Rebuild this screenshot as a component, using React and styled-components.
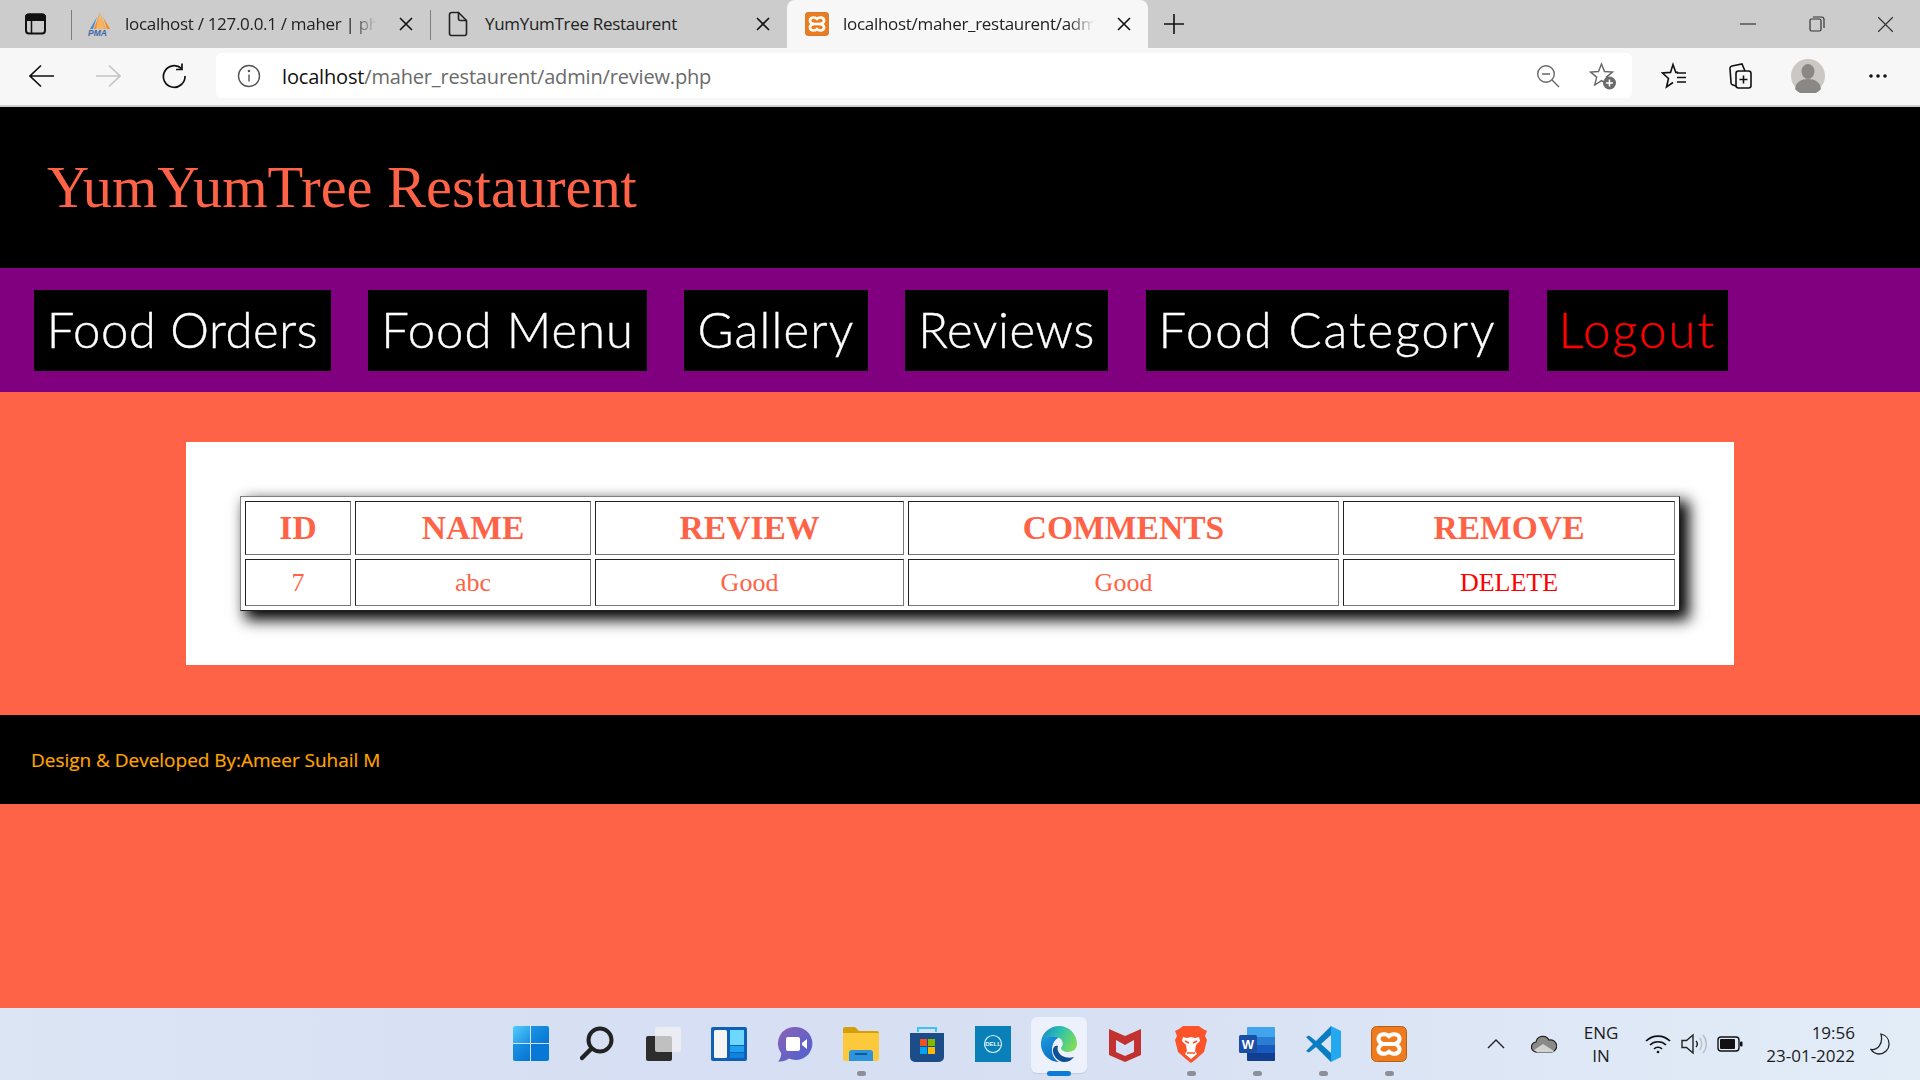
import styled, { createGlobalStyle } from "styled-components";

const GlobalStyle = createGlobalStyle`
  html, body {
    margin: 0;
    padding: 0;
    background: #ff6347;
    overflow: hidden;
  }
`;

const Screen = styled.div`
  width: 1920px;
  height: 1080px;
  display: flex;
  flex-direction: column;
  background: #ff6347;
  overflow: hidden;
`;

/* browser chrome */
const TabStrip = styled.div`
  height: 48px;
  flex: none;
  display: flex;
  align-items: stretch;
  background: #cccccc;
  font-family: "Open Sans", sans-serif;
  font-size: 17px;
  color: #222;
`;

const SideButton = styled.div`
  width: 71px;
  display: flex;
  align-items: center;
  padding-left: 24px;
  box-sizing: border-box;
`;

const Tab = styled.div`
  position: relative;
  width: ${(p) => p.$width}px;
  box-sizing: border-box;
  display: flex;
  align-items: center;
  padding: 0 17px 0 ${(p) => p.$pad}px;
  background: ${(p) => (p.$active ? "#f7f7f7" : "transparent")};
  border-radius: ${(p) => (p.$active ? "8px 8px 0 0" : "0")};
`;

const TabDivider = styled.span`
  position: absolute;
  left: 0;
  top: 10px;
  bottom: 8px;
  width: 1px;
  background: #7d7d7d;
`;

const TabIconSlot = styled.span`
  width: ${(p) => p.$width}px;
  flex: none;
  display: flex;
  align-items: center;
`;

const TabLabel = styled.span`
  flex: 1;
  min-width: 0;
  padding-bottom: 2px;
  white-space: nowrap;
  letter-spacing: -0.3px;
  ${(p) =>
    p.$fade &&
    `-webkit-mask-image: linear-gradient(to right, #000 86%, transparent 96%);
     mask-image: linear-gradient(to right, #000 86%, transparent 96%);`}
`;

const TabClose = styled.span`
  width: 14px;
  height: 14px;
  flex: none;
  margin-left: 12px;
  display: flex;
`;

const NewTab = styled.div`
  width: 52px;
  display: flex;
  align-items: center;
  justify-content: center;
`;

const WindowButtons = styled.div`
  margin-left: auto;
  display: flex;
  align-items: center;
`;

const WindowButton = styled.div`
  width: 69px;
  height: 48px;
  display: flex;
  align-items: center;
  justify-content: center;
`;

const Toolbar = styled.div`
  height: 59px;
  flex: none;
  box-sizing: border-box;
  display: flex;
  align-items: center;
  background: #f7f7f7;
  border-bottom: 2px solid #cfcfcf;
  padding: 0 0 2px 9px;
`;

const ToolButton = styled.div`
  width: ${(p) => p.$width || 66}px;
  height: 44px;
  flex: none;
  display: flex;
  align-items: center;
  justify-content: center;
`;

const AddressBar = styled.div`
  width: 1416px;
  height: 45px;
  margin-left: 9px;
  margin-right: 9px;
  flex: none;
  box-sizing: border-box;
  display: flex;
  align-items: center;
  background: #fff;
  border-radius: 6px;
  padding: 0 2px 0 21px;
  font-family: "Open Sans", sans-serif;
  font-size: 20px;
  letter-spacing: -0.17px;
`;

const UrlText = styled.div`
  margin-left: 21px;
  padding-top: 1px;
  flex: 1;
  color: #6a6a6a;
  white-space: nowrap;
  b {
    font-weight: 400;
    color: #111;
  }
`;

const AddressAction = styled.div`
  width: 55px;
  height: 44px;
  display: flex;
  align-items: center;
  justify-content: center;
`;

/* page */
const Header = styled.header`
  height: 161px;
  flex: none;
  box-sizing: border-box;
  background: #000;
  display: flex;
  align-items: center;
  padding: 0 0 1px 47px;
`;

const Title = styled.h1`
  margin: 0;
  font-family: "Liberation Serif", serif;
  font-weight: 400;
  font-size: 58.4px;
  color: #ff6347;
`;

const Nav = styled.nav`
  height: 124px;
  flex: none;
  box-sizing: border-box;
  background: #800080;
  display: flex;
  align-items: center;
  padding: 0 0 0 34px;
`;

const NavLink = styled.a`
  width: ${(p) => p.$width}px;
  height: 81px;
  margin-right: ${(p) => p.$gap}px;
  padding-bottom: 2px;
  box-sizing: border-box;
  flex: none;
  background: #000;
  color: ${(p) => (p.$danger ? "#ff0000" : "#fff")};
  display: flex;
  align-items: center;
  justify-content: center;
  font-family: "Lato", sans-serif;
  font-weight: 300;
  font-size: 49px;
  letter-spacing: ${(p) => p.$spacing}px;
  -webkit-text-stroke: 0.4px currentColor;
  white-space: nowrap;
`;

const Main = styled.main`
  flex: none;
  padding: 50px 186px;
`;

const Panel = styled.section`
  height: 223px;
  box-sizing: border-box;
  background: #fff;
  padding: 54px 0 0 54px;
`;

const ReviewTable = styled.table`
  width: 1440px;
  table-layout: fixed;
  border-collapse: separate;
  border-spacing: 4px;
  background: #fff;
  border: 1px solid;
  border-color: #808080 #222 #222 #808080;
  box-shadow: 7px 7px 14px 2px #000;
  font-family: "Liberation Serif", serif;
  color: #ff6347;
`;

const HeadCell = styled.th`
  height: 54px;
  box-sizing: border-box;
  padding: 0;
  border: 1px solid;
  border-color: #222 #777 #777 #222;
  font-size: 33.6px;
  font-weight: 700;
  text-align: center;
`;

const BodyCell = styled.td`
  height: 47px;
  box-sizing: border-box;
  padding: 0;
  border: 1px solid;
  border-color: #222 #777 #777 #222;
  font-size: 26px;
  text-align: center;
  color: ${(p) => (p.$danger ? "#ff0000" : "#ff6347")};
`;

const Footer = styled.footer`
  height: 89px;
  flex: none;
  box-sizing: border-box;
  background: #000;
  color: #ffa500;
  display: flex;
  align-items: center;
  padding: 0 0 0 31px;
  font-family: "Open Sans", sans-serif;
  font-weight: 500;
  font-size: 19px;
  letter-spacing: -0.02px;
  -webkit-text-stroke: 0.2px currentColor;
`;

const Spacer = styled.div`
  flex: 1;
`;

/* taskbar */
const Taskbar = styled.div`
  height: 72px;
  flex: none;
  display: grid;
  grid-template-columns: 1fr auto 1fr;
  align-items: center;
  background: linear-gradient(to right, #dbe5f4, #d6dff3 35%, #d8e1f3 60%, #e3edf8);
  font-family: "Open Sans", sans-serif;
  color: #1c1c1c;
  font-size: 17px;
`;

const TaskIcons = styled.div`
  grid-column: 2;
  display: flex;
`;

const TaskItem = styled.div`
  position: relative;
  width: 66px;
  height: 72px;
  display: flex;
  align-items: center;
  justify-content: center;
  box-sizing: border-box;
  &::before {
    content: "";
    display: ${(p) => (p.$active ? "block" : "none")};
    position: absolute;
    left: 5px;
    right: 5px;
    top: 9px;
    bottom: 7px;
    background: #edf1fb;
    border-radius: 6px;
    box-shadow: 0 1px 1px #c3cbdc;
  }
  &::after {
    content: "";
    display: ${(p) => (p.$dot || p.$active ? "block" : "none")};
    position: absolute;
    left: 50%;
    bottom: 4px;
    width: ${(p) => (p.$active ? 24 : 9)}px;
    height: 5px;
    margin-left: ${(p) => (p.$active ? -12 : -4.5)}px;
    border-radius: 3px;
    background: ${(p) => (p.$active ? "#0a7bd7" : "#8c8f99")};
  }
  svg {
    position: relative;
    z-index: 1;
  }
`;

const Tray = styled.div`
  grid-column: 3;
  display: flex;
  align-items: center;
  height: 72px;
  padding-left: 57px;
`;

const TraySlot = styled.div`
  width: ${(p) => p.$width}px;
  margin-left: ${(p) => p.$gap || 0}px;
  flex: none;
  display: flex;
  align-items: center;
  justify-content: center;
`;

const TrayText = styled.div`
  width: ${(p) => p.$width}px;
  flex: none;
  display: flex;
  flex-direction: column;
  align-items: ${(p) => p.$align};
  line-height: 23px;
  white-space: nowrap;
`;

/* icons */
const SidebarIcon = () => (
  <svg width="24" height="24" viewBox="0 0 24 24" fill="none" stroke="#111" strokeWidth="2">
    <rect x="2" y="2.5" width="19" height="19" rx="3" />
    <path d="M2 8h19V5a2.500 2.500 0 0 0-2.500-2.500h-14A2.500 2.500 0 0 0 2 5z" fill="#111" />
    <path d="M7.500 8v13" strokeWidth="1.500" />
  </svg>
);

const PmaIcon = () => (
  <svg width="26" height="26" viewBox="0 0 26 26">
    <path d="M13 1L7 18h3z" fill="#f28a1e" />
    <path d="M13 1l6 17h-3z" fill="#f7a64a" />
    <path d="M10 6L3 18h3z" fill="#4f86c6" />
    <path d="M16 6l7 12h-3z" fill="#f28a1e" />
    <path d="M11 7l-2 11h8l-2-11z" fill="#f9b361" />
    <text x="1" y="25" fontSize="8.500" fontStyle="italic" fontWeight="700" fontFamily="Liberation Sans, sans-serif" fill="#3a66a8">PMA</text>
  </svg>
);

const DocIcon = () => (
  <svg width="20" height="26" viewBox="0 0 20 26" fill="none" stroke="#222" strokeWidth="1.600">
    <path d="M1.500 3.500a2 2 0 0 1 2-2h7l8 8v13a2 2 0 0 1-2 2h-13a2 2 0 0 1-2-2z" />
    <path d="M10.500 1.500v6a2 2 0 0 0 2 2h6" />
  </svg>
);

const CloseIcon = ({ size = 14, weight = 1.6, color = "#111" }) => (
  <svg width={size} height={size} viewBox="0 0 14 14" stroke={color} strokeWidth={weight}>
    <path d="M1 1l12 12M13 1L1 13" />
  </svg>
);

const XamppIcon = ({ size }) => (
  <svg width={size} height={size} viewBox="0 0 36 36">
    <rect x="0.500" y="0.500" width="35" height="35" rx="5" fill="#ee7c1f" stroke="#b65f16" />
    <path
      d="M18 10.500C16 7.500 8.500 7 7.500 12c-.5 3 2 5 4.500 6-2.500 1-5 3-4.500 6 1 5 8.500 4.500 10.500 1.500 2 3 9.500 3.500 10.500-1.500.5-3-2-5-4.500-6 2.500-1 5-3 4.500-6-1-5-8.500-4.500-10.500-1.500z"
      fill="none"
      stroke="#fff"
      strokeWidth="4"
      strokeLinejoin="round"
    />
    <path d="M12 18h12" stroke="#fff" strokeWidth="4" />
  </svg>
);

const PlusIcon = () => (
  <svg width="22" height="22" viewBox="0 0 22 22" stroke="#111" strokeWidth="1.600">
    <path d="M11 1v20M1 11h20" />
  </svg>
);

const MinimizeIcon = () => (
  <svg width="16" height="4" viewBox="0 0 16 4" stroke="#333" strokeWidth="1.200">
    <path d="M0 2h16" />
  </svg>
);

const RestoreIcon = () => (
  <svg width="16" height="16" viewBox="0 0 16 16" fill="none" stroke="#333" strokeWidth="1.200">
    <rect x="1" y="3" width="11" height="12" rx="1.500" />
    <path d="M4 1h8.500A2.500 2.500 0 0 1 15 3.500V12" />
  </svg>
);

const BackIcon = () => (
  <svg width="26" height="24" viewBox="0 0 26 24" fill="none" stroke="#111" strokeWidth="1.700">
    <path d="M1 12h24M12 1.500L1 12l11 10.500" />
  </svg>
);

const ForwardIcon = () => (
  <svg width="26" height="24" viewBox="0 0 26 24" fill="none" stroke="#c4c4c4" strokeWidth="1.700">
    <path d="M25 12H1M14 1.500L25 12 14 22.500" />
  </svg>
);

const ReloadIcon = () => (
  <svg width="26" height="26" viewBox="0 0 26 26" fill="none" stroke="#111" strokeWidth="1.700">
    <path d="M20.500 5.500A10.800 10.800 0 1 0 24 13" />
    <path d="M21 0.500v6h-6" />
  </svg>
);

const InfoIcon = () => (
  <svg width="24" height="24" viewBox="0 0 24 24" fill="none" stroke="#555" strokeWidth="1.400">
    <circle cx="12" cy="12" r="10.500" />
    <path d="M12 10.500v7" />
    <circle cx="12" cy="7" r="0.600" fill="#555" />
  </svg>
);

const ZoomOutIcon = () => (
  <svg width="24" height="24" viewBox="0 0 24 24" fill="none" stroke="#666" strokeWidth="1.400">
    <circle cx="10" cy="10" r="8.300" />
    <path d="M16 16l7 7M6 10h8" />
  </svg>
);

const StarAddIcon = () => (
  <svg width="28" height="28" viewBox="0 0 28 28" fill="none">
    <path
      d="M12.500 2l3 7.500 8 .6-6.200 5 2 7.900-6.800-4.300-6.800 4.300 2-7.900-6.200-5 8-.6z"
      stroke="#666"
      strokeWidth="1.400"
    />
    <circle cx="20.500" cy="21" r="6.500" fill="#6b6b6b" />
    <path d="M20.500 17.500v7M17 21h7" stroke="#fff" strokeWidth="1.500" />
  </svg>
);

const FavoritesIcon = () => (
  <svg width="26" height="28" viewBox="0 0 26 28" fill="none" stroke="#111" strokeWidth="1.600">
    <path d="M12 20.500L5.500 25l2-8.500L1.500 11l8-.6L12 2.500l2.800 7.900H17" />
    <path d="M16 11h9M16 15.500h9M16 20h9" />
  </svg>
);

const CollectionsIcon = () => (
  <svg width="26" height="28" viewBox="0 0 26 28" fill="none" stroke="#111" strokeWidth="1.600">
    <rect x="9" y="9" width="15" height="17" rx="2.500" />
    <path d="M16.500 13.500v8M12.500 17.500h8" />
    <path d="M9 24l-3-1a2.500 2.500 0 0 1-2-3L3 7a2.500 2.500 0 0 1 2-3l10-2 3 7" />
  </svg>
);

const ProfileIcon = () => (
  <svg width="34" height="34" viewBox="0 0 34 34">
    <circle cx="17" cy="17" r="17" fill="#cbc8c3" />
    <ellipse cx="17" cy="12.500" rx="6.500" ry="7.500" fill="#8a8884" />
    <path d="M4 30c1-7 6-10 13-10s12 3 13 10a17 17 0 0 1-26 0z" fill="#8a8884" />
  </svg>
);

const MoreIcon = () => (
  <svg width="20" height="6" viewBox="0 0 20 6" fill="#111">
    <circle cx="3" cy="3" r="1.800" />
    <circle cx="10" cy="3" r="1.800" />
    <circle cx="17" cy="3" r="1.800" />
  </svg>
);

const WindowsIcon = () => (
  <svg width="36" height="36" viewBox="0 0 36 36">
    <defs>
      <linearGradient id="winA" x1="0" y1="0" x2="1" y2="1">
        <stop offset="0" stopColor="#52cdfb" />
        <stop offset="1" stopColor="#1a90e2" />
      </linearGradient>
      <linearGradient id="winB" x1="0" y1="0" x2="1" y2="1">
        <stop offset="0" stopColor="#1c95e4" />
        <stop offset="1" stopColor="#0574d2" />
      </linearGradient>
    </defs>
    <path d="M2 0h15v17H0V2a2 2 0 0 1 2-2z" fill="url(#winA)" />
    <path d="M18 0h16a2 2 0 0 1 2 2v15H18z" fill="url(#winB)" />
    <path d="M0 18h17v17H2a2 2 0 0 1-2-2z" fill="url(#winB)" />
    <path d="M18 18h18v15a2 2 0 0 1-2 2H18z" fill="#0778d6" />
  </svg>
);

const SearchIcon = () => (
  <svg width="34" height="36" viewBox="0 0 34 36" fill="none" stroke="#222" strokeLinecap="round">
    <circle cx="20" cy="14" r="11.500" strokeWidth="4" />
    <path d="M11 23l-9 9" strokeWidth="4.500" />
  </svg>
);

const TaskViewIcon = () => (
  <svg width="36" height="36" viewBox="0 0 36 36">
    <rect x="1" y="10" width="26" height="25" rx="2" fill="#2d2d2d" />
    <rect x="10" y="1" width="26" height="25" rx="2" fill="#f2f2f2" fillOpacity="0.750" />
  </svg>
);

const WidgetsIcon = () => (
  <svg width="36" height="34" viewBox="0 0 36 34">
    <rect width="36" height="34" rx="2" fill="#0f5fb4" />
    <rect x="3" y="3" width="13" height="28" rx="1.500" fill="#f5f5f5" />
    <rect x="19" y="3" width="14" height="15" fill="#6cd8ff" />
    <rect x="19" y="19" width="14" height="6" fill="#1ea2f0" />
    <rect x="19" y="26" width="14" height="5" fill="#0f83dd" />
  </svg>
);

const ChatIcon = () => (
  <svg width="36" height="36" viewBox="0 0 36 36">
    <defs>
      <linearGradient id="chatA" x1="0" y1="0" x2="1" y2="1">
        <stop offset="0" stopColor="#8b62b6" />
        <stop offset="1" stopColor="#4c62cf" />
      </linearGradient>
    </defs>
    <path d="M19 1a16.500 16.500 0 1 1-7 31.500C9 35 5 35.500 1 35.500c2-2 3-4.500 3.300-8A16.500 16.500 0 0 1 19 1z" fill="url(#chatA)" />
    <rect x="9" y="11" width="14" height="14" rx="2" fill="#fff" />
    <path d="M25 17l5-4v10l-5-4z" fill="#fff" />
  </svg>
);

const ExplorerIcon = () => (
  <svg width="36" height="34" viewBox="0 0 36 34">
    <path d="M0 2a2 2 0 0 1 2-2h10l4 4h18a2 2 0 0 1 2 2v6H0z" fill="#d59f0c" />
    <path d="M0 6h36v26a2 2 0 0 1-2 2H2a2 2 0 0 1-2-2z" fill="#fbc93b" />
    <path d="M6 34v-8a3 3 0 0 1 3-3h18a3 3 0 0 1 3 3v8z" fill="#2f93dc" />
    <path d="M12 27h12" stroke="#0c5a9c" strokeWidth="2" />
  </svg>
);

const StoreIcon = () => (
  <svg width="36" height="36" viewBox="0 0 36 36">
    <path d="M9 6V2h18v4" fill="none" stroke="#3ac5f0" strokeWidth="2" />
    <path d="M1 7h34v24a5 5 0 0 1-5 5H6a5 5 0 0 1-5-5z" fill="#1c4d88" />
    <rect x="11" y="13" width="7" height="7" fill="#f25022" />
    <rect x="19" y="13" width="7" height="7" fill="#7fba00" />
    <rect x="11" y="21" width="7" height="7" fill="#00a4ef" />
    <rect x="19" y="21" width="7" height="7" fill="#ffb900" />
  </svg>
);

const DellIcon = () => (
  <svg width="36" height="36" viewBox="0 0 36 36">
    <rect width="36" height="36" fill="#0a80b8" />
    <circle cx="18" cy="18" r="8.500" fill="none" stroke="#d7eef8" strokeWidth="1.200" />
    <text x="18" y="20" textAnchor="middle" fontSize="6" fontWeight="700" fontFamily="Liberation Sans, sans-serif" fill="#e6f5fb">DELL</text>
  </svg>
);

const EdgeIcon = () => (
  <svg width="38" height="38" viewBox="0 0 38 38">
    <defs>
      <linearGradient id="edgeTop" x1="0" y1="0.200" x2="1" y2="0.600">
        <stop offset="0" stopColor="#1b86c8" />
        <stop offset="0.450" stopColor="#2cc0b0" />
        <stop offset="1" stopColor="#7fdd58" />
      </linearGradient>
      <linearGradient id="edgeLeft" x1="0" y1="0" x2="0.600" y2="1">
        <stop offset="0" stopColor="#1d9ae0" />
        <stop offset="1" stopColor="#0c6cc0" />
      </linearGradient>
    </defs>
    <path
      d="M1 17C2 7 11 1 19 1c10 0 18 8 18 18 0 5-4 8-9 8-4 0-7-2-7-4 0-1 1-1.500 1.500-2.500C23.500 18 22 13 17 12 9 11 2 14 1 17z"
      fill="url(#edgeTop)"
    />
    <path
      d="M1 17C0 28 9 37 19 37c-3-1-7-6-7-12s3-11 7-12.500C11 10 2 13 1 17z"
      fill="url(#edgeLeft)"
    />
    <path
      d="M13 24c-1 7 6 13 11 13 4 0 8-2 10-5-4 1-8 1-11.500-1-3.500-2-6-6-4.500-10-2-1-4 0-5 3z"
      fill="#0f4f94"
    />
  </svg>
);

const McafeeIcon = () => (
  <svg width="34" height="36" viewBox="0 0 34 36">
    <path d="M1 3l16 7 16-7v26l-16 7-16-7z" fill="#c1312f" />
    <path d="M8 14v12l9 4 9-4V14l-9 5z" fill="#d6dff3" />
  </svg>
);

const BraveIcon = () => (
  <svg width="32" height="38" viewBox="0 0 32 38">
    <path d="M8 1h16l4 3 4 2-2 5 2 4-3 12-9 8-4 3-4-3-9-8-3-12 2-4-2-5 4-2z" fill="#fb542b" />
    <path d="M8 12l4 1 4-1 4 1 4-1 1 4-4 4-1 6 2 3-6 5-6-5 2-3-1-6-4-4z" fill="#fff" />
    <path d="M10 16l4 2M22 16l-4 2M12 28h8" stroke="#fb542b" strokeWidth="1.600" />
  </svg>
);

const WordIcon = () => (
  <svg width="36" height="34" viewBox="0 0 36 34">
    <path d="M8 1a1 1 0 0 1 1-1h26a1 1 0 0 1 1 1v9H8z" fill="#41a5ee" />
    <rect x="8" y="10" width="28" height="8" fill="#2b7cd3" />
    <rect x="8" y="18" width="28" height="8" fill="#185abd" />
    <path d="M8 26h28v7a1 1 0 0 1-1 1H9a1 1 0 0 1-1-1z" fill="#103f91" />
    <rect y="8" width="18" height="18" rx="1.500" fill="#1a4fa5" />
    <text x="9" y="22" textAnchor="middle" fontSize="13" fontWeight="700" fontFamily="Liberation Sans, sans-serif" fill="#fff">W</text>
  </svg>
);

const VsCodeIcon = () => (
  <svg width="36" height="36" viewBox="0 0 36 36">
    <path d="M26 0l10 5v26l-10 5z" fill="#24a9f0" />
    <path d="M26 0L11 15 4 9.500 1 11l7 7-7 7 3 1.500L11 21l15 15v-9l-10-9 10-9z" fill="#0a7cc2" />
  </svg>
);

const ChevronIcon = () => (
  <svg width="20" height="12" viewBox="0 0 20 12" fill="none" stroke="#222" strokeWidth="1.400">
    <path d="M2 10l8-8 8 8" />
  </svg>
);

const CloudIcon = () => (
  <svg width="26" height="18" viewBox="0 0 26 18">
    <path d="M6 17a5 5 0 0 1-1-10 7 7 0 0 1 13-2 6 6 0 0 1 3 12z" fill="#8a8a86" stroke="#222" strokeWidth="1.200" />
    <path d="M3 15l9-6 11 7-1 1H6z" fill="#d2d2d0" />
  </svg>
);

const WifiIcon = () => (
  <svg width="26" height="20" viewBox="0 0 26 20" fill="none" stroke="#111" strokeWidth="1.700">
    <path d="M1 7a17 17 0 0 1 24 0M5 11a11.500 11.500 0 0 1 16 0M9 15a5.500 5.500 0 0 1 8 0" />
    <circle cx="13" cy="18" r="1.300" fill="#111" stroke="none" />
  </svg>
);

const VolumeIcon = () => (
  <svg width="26" height="22" viewBox="0 0 26 22" fill="none" stroke="#222" strokeWidth="1.400">
    <path d="M1 7.500h4.500L12 2v18l-6.500-5.500H1z" />
    <path d="M15 8a4.500 4.500 0 0 1 0 6" />
    <path d="M18.500 5a9 9 0 0 1 0 12M22 2a14 14 0 0 1 0 18" stroke="#b9bdc4" />
  </svg>
);

const BatteryIcon = () => (
  <svg width="26" height="16" viewBox="0 0 26 16">
    <rect x="1" y="1" width="21" height="14" rx="3" fill="none" stroke="#111" strokeWidth="1.400" />
    <rect x="3" y="3" width="15" height="10" rx="1" fill="#111" />
    <rect x="23" y="5.500" width="2.500" height="5" rx="1" fill="#111" />
  </svg>
);

const MoonIcon = () => (
  <svg width="20" height="22" viewBox="0 0 22 24" fill="none" stroke="#222" strokeWidth="1.400">
    <path d="M12 1c5 1 9 5 9 11 0 6-5 11-11 11-3 0-7-2-9-5 7 1 14-6 11-17z" />
  </svg>
);

const navItems = [
  { label: "Food Orders", width: 297, gap: 37, spacing: 0.55 },
  { label: "Food Menu", width: 279, gap: 37, spacing: 1 },
  { label: "Gallery", width: 184, gap: 37, spacing: 1.2 },
  { label: "Reviews", width: 203, gap: 38, spacing: 0.6 },
  { label: "Food Category", width: 363, gap: 38, spacing: 1.9 },
  { label: "Logout", width: 181, gap: 0, spacing: 2, danger: true },
];

const taskItems = [
  { id: "start", icon: <WindowsIcon /> },
  { id: "search", icon: <SearchIcon /> },
  { id: "view", icon: <TaskViewIcon /> },
  { id: "widgets", icon: <WidgetsIcon /> },
  { id: "chat", icon: <ChatIcon /> },
  { id: "files", icon: <ExplorerIcon />, dot: true },
  { id: "store", icon: <StoreIcon /> },
  { id: "dell", icon: <DellIcon /> },
  { id: "edge", icon: <EdgeIcon />, active: true },
  { id: "mcafee", icon: <McafeeIcon /> },
  { id: "brave", icon: <BraveIcon />, dot: true },
  { id: "word", icon: <WordIcon />, dot: true },
  { id: "vscode", icon: <VsCodeIcon />, dot: true },
  { id: "xampp", icon: <XamppIcon size={36} />, dot: true },
];

const columns = [106, 236, 309, 431, 332];

const App = () => {
  return (
    <Screen>
      <GlobalStyle />
      <TabStrip>
        <SideButton>
          <SidebarIcon />
        </SideButton>
        <Tab $width={359} $pad={16}>
          <TabDivider />
          <TabIconSlot $width={38}>
            <PmaIcon />
          </TabIconSlot>
          <TabLabel $fade>localhost / 127.0.0.1 / maher | ph</TabLabel>
          <TabClose>
            <CloseIcon />
          </TabClose>
        </Tab>
        <Tab $width={357} $pad={18}>
          <TabDivider />
          <TabIconSlot $width={37}>
            <DocIcon />
          </TabIconSlot>
          <TabLabel>YumYumTree Restaurent</TabLabel>
          <TabClose>
            <CloseIcon />
          </TabClose>
        </Tab>
        <Tab $width={361} $pad={18} $active>
          <TabIconSlot $width={38}>
            <XamppIcon size={24} />
          </TabIconSlot>
          <TabLabel $fade>localhost/maher_restaurent/adm</TabLabel>
          <TabClose>
            <CloseIcon />
          </TabClose>
        </Tab>
        <NewTab>
          <PlusIcon />
        </NewTab>
        <WindowButtons>
          <WindowButton>
            <MinimizeIcon />
          </WindowButton>
          <WindowButton>
            <RestoreIcon />
          </WindowButton>
          <WindowButton>
            <CloseIcon size={17} weight={1} color="#333" />
          </WindowButton>
        </WindowButtons>
      </TabStrip>
      <Toolbar>
        <ToolButton>
          <BackIcon />
        </ToolButton>
        <ToolButton>
          <ForwardIcon />
        </ToolButton>
        <ToolButton>
          <ReloadIcon />
        </ToolButton>
        <AddressBar>
          <InfoIcon />
          <UrlText>
            <b>localhost</b>/maher_restaurent/admin/review.php
          </UrlText>
          <AddressAction>
            <ZoomOutIcon />
          </AddressAction>
          <AddressAction>
            <StarAddIcon />
          </AddressAction>
        </AddressBar>
        <ToolButton $width={66}>
          <FavoritesIcon />
        </ToolButton>
        <ToolButton $width={66}>
          <CollectionsIcon />
        </ToolButton>
        <ToolButton $width={70}>
          <ProfileIcon />
        </ToolButton>
        <ToolButton $width={70}>
          <MoreIcon />
        </ToolButton>
      </Toolbar>

      <Header>
        <Title>YumYumTree Restaurent</Title>
      </Header>
      <Nav>
        {navItems.map((item) => (
          <NavLink
            key={item.label}
            $width={item.width}
            $gap={item.gap}
            $spacing={item.spacing}
            $danger={item.danger}
          >
            {item.label}
          </NavLink>
        ))}
      </Nav>
      <Main>
        <Panel>
          <ReviewTable>
            <colgroup>
              {columns.map((w) => (
                <col key={w} style={{ width: w }} />
              ))}
            </colgroup>
            <thead>
              <tr>
                <HeadCell>ID</HeadCell>
                <HeadCell>NAME</HeadCell>
                <HeadCell>REVIEW</HeadCell>
                <HeadCell>COMMENTS</HeadCell>
                <HeadCell>REMOVE</HeadCell>
              </tr>
            </thead>
            <tbody>
              <tr>
                <BodyCell>7</BodyCell>
                <BodyCell>abc</BodyCell>
                <BodyCell>Good</BodyCell>
                <BodyCell>Good</BodyCell>
                <BodyCell $danger>DELETE</BodyCell>
              </tr>
            </tbody>
          </ReviewTable>
        </Panel>
      </Main>
      <Footer>Design &amp; Developed By:Ameer Suhail M</Footer>
      <Spacer />
      <Taskbar>
        <TaskIcons>
          {taskItems.map((item) => (
            <TaskItem key={item.id} $dot={item.dot} $active={item.active}>
              {item.icon}
            </TaskItem>
          ))}
        </TaskIcons>
        <Tray>
          <TraySlot $width={34}>
            <ChevronIcon />
          </TraySlot>
          <TraySlot $width={62}>
            <CloudIcon />
          </TraySlot>
          <TrayText $width={52} $align="center">
            <span>ENG</span>
            <span>IN</span>
          </TrayText>
          <TraySlot $width={36} $gap={13}>
            <WifiIcon />
          </TraySlot>
          <TraySlot $width={36}>
            <VolumeIcon />
          </TraySlot>
          <TraySlot $width={36}>
            <BatteryIcon />
          </TraySlot>
          <TrayText $width={107} $align="flex-end">
            <span>19:56</span>
            <span>23-01-2022</span>
          </TrayText>
          <TraySlot $width={50}>
            <MoonIcon />
          </TraySlot>
        </Tray>
      </Taskbar>
    </Screen>
  );
};

export default App;
